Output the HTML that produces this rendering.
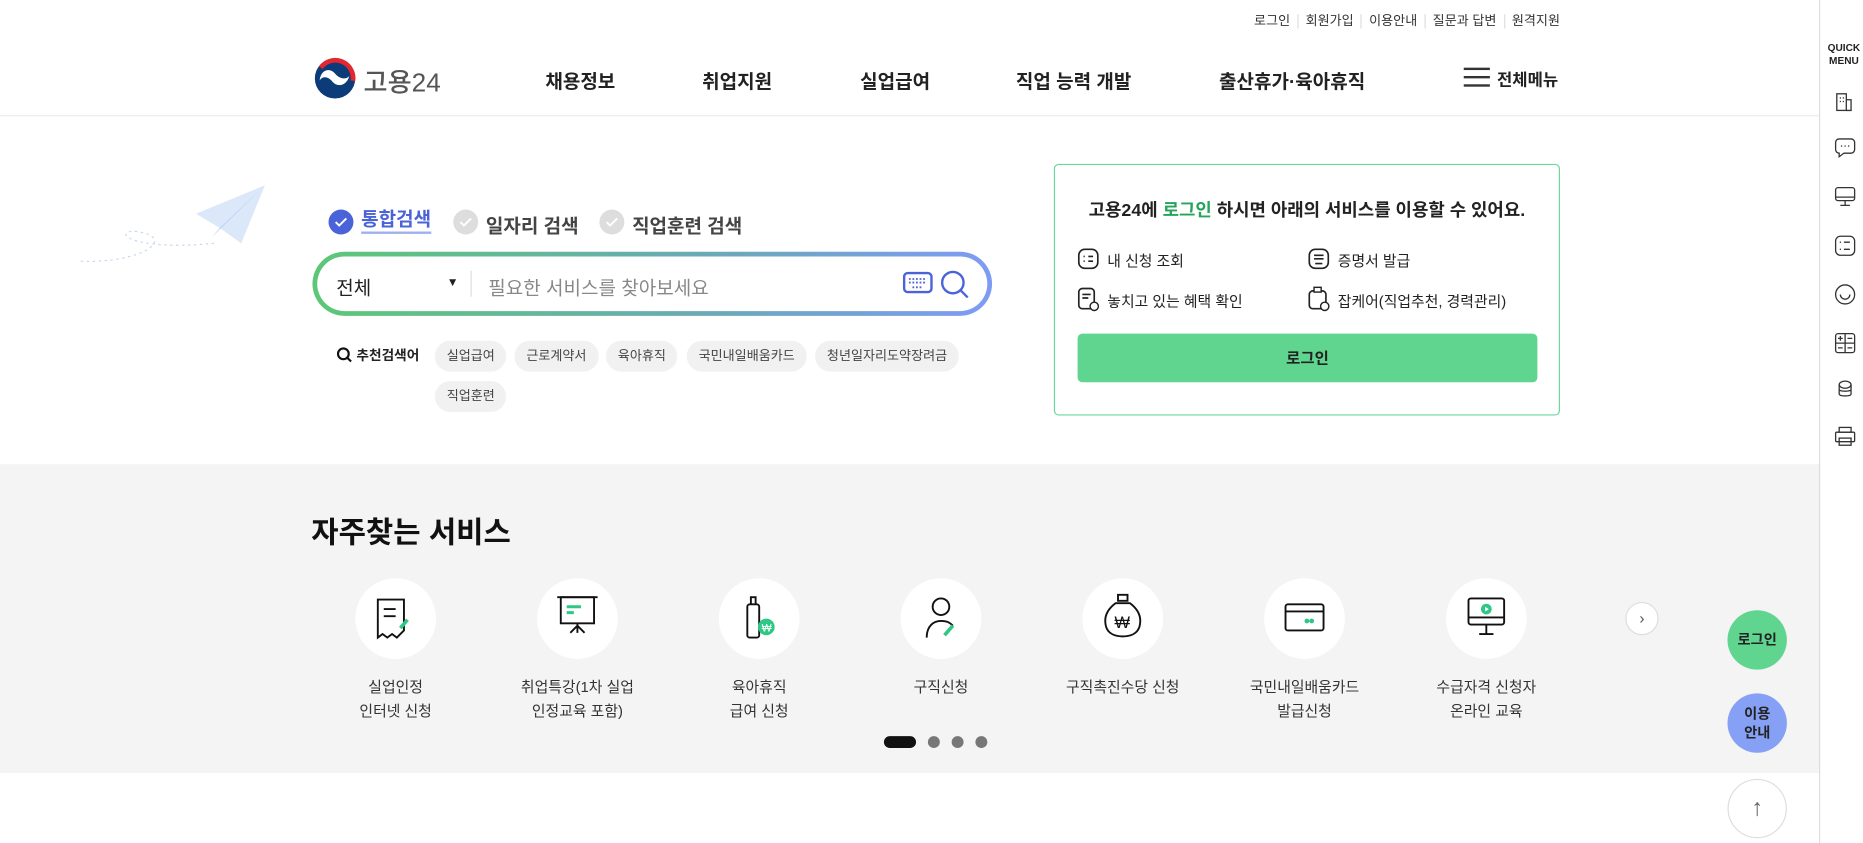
<!DOCTYPE html>
<html><head><meta charset="utf-8">
<style>
*{margin:0;padding:0;box-sizing:border-box}
html,body{width:1863px;height:843px;overflow:hidden;background:#fff}
#w{position:absolute;left:0;top:0;width:1568px;height:710px;transform:scale(1.1881,1.1873);transform-origin:0 0;font-family:"Liberation Sans","Noto Sans CJK KR",sans-serif;color:#222}
.a{position:absolute}
.util{top:9px;right:255px;font-size:11px;color:#333}
.util span{margin-left:6px;padding-left:6px;border-left:1px solid #ddd}
.util span:first-child{border:none}
.nav{top:55px;font-size:16px;font-weight:bold;color:#222}
.tag{position:absolute;height:26px;line-height:26px;padding:0 10px;background:#f1f1f1;border-radius:13px;font-size:11px;color:#444}
.circ{position:absolute;width:68px;height:68px;border-radius:50%;background:#fff;top:487px}
.lab{position:absolute;top:569px;width:140px;text-align:center;font-size:12.5px;line-height:20px;color:#333}
</style></head><body><div id="w">
<div class="a util"><span>로그인</span><span>회원가입</span><span>이용안내</span><span>질문과 답변</span><span>원격지원</span></div>
<svg class="a" style="left:264px;top:48px" width="36" height="36" viewBox="0 0 36 36"><circle cx="18" cy="18" r="17" fill="#0b3b78"/><path d="M6 9 A15 15 0 0 1 33 20" stroke="#e3262f" stroke-width="4" fill="none"/><path d="M5 20 C6 10 14 9 18 14 C22 19 28 19 30 16 C28 24 20 26 16 21 C12 16 7 16 5 20Z" fill="#fff"/></svg>
<div class="a" style="left:306px;top:52px;font-size:22px;color:#555;font-weight:500">고용24</div>
<div class="a nav" style="left:459px">채용정보</div>
<div class="a nav" style="left:591px">취업지원</div>
<div class="a nav" style="left:724px">실업급여</div>
<div class="a nav" style="left:855px">직업 능력 개발</div>
<div class="a nav" style="left:1026px">출산휴가·육아휴직</div>
<div class="a" style="left:1232px;top:57px;width:22px;height:16px;border-top:2px solid #333;border-bottom:2px solid #333"><div style="margin-top:5px;border-top:2px solid #333"></div></div>
<div class="a" style="left:1260px;top:57px;font-size:14px;font-weight:bold">전체메뉴</div>
<div class="a" style="left:0;top:97px;width:1531px;border-top:1px solid #eaeaea"></div>
<div class="a" style="left:1531px;top:0;height:710px;border-left:1px solid #ddd"></div>
<svg class="a" style="left:60px;top:150px" width="170" height="75"><path d="M8 70 C60 72 90 50 55 45 C35 43 45 62 120 55" stroke="#c8d6ec" stroke-dasharray="2 3" fill="none"/><path d="M105 30 L163 6 L143 55 L125 42 Z" fill="#dbe8fa"/><path d="M125 42 L163 6 L118 50 Z" fill="#b8d0f2"/></svg>
<svg class="a" style="left:276px;top:176px" width="22" height="22"><circle cx="11" cy="11" r="10.5" fill="#4a63d9"/><path d="M6.5 11l3 3 6-6" stroke="#fff" stroke-width="1.6" fill="none"/></svg>
<div class="a" style="left:304px;top:177px;font-size:16px;font-weight:bold;color:#4a63d9;border-bottom:2px solid #9fb0ee;line-height:18px">통합검색</div>
<svg class="a" style="left:381px;top:176px" width="22" height="22"><circle cx="11" cy="11" r="10.5" fill="#ddd"/><path d="M6.5 11l3 3 6-6" stroke="#fff" stroke-width="1.6" fill="none"/></svg>
<div class="a" style="left:409px;top:177px;font-size:16px;font-weight:bold;color:#444">일자리 검색</div>
<svg class="a" style="left:504px;top:176px" width="22" height="22"><circle cx="11" cy="11" r="10.5" fill="#ddd"/><path d="M6.5 11l3 3 6-6" stroke="#fff" stroke-width="1.6" fill="none"/></svg>
<div class="a" style="left:532px;top:177px;font-size:16px;font-weight:bold;color:#444">직업훈련 검색</div>
<div class="a" style="left:263px;top:212px;width:572px;height:54px;border-radius:27px;background:linear-gradient(90deg,#5cc777,#6aa9b8 60%,#7e9bf5)"><div style="position:absolute;left:4px;top:4px;right:4px;bottom:4px;border-radius:23px;background:#fff"></div></div>
<div class="a" style="left:283px;top:229px;font-size:16px">전체</div>
<div class="a" style="left:376px;top:233px;font-size:10px">▼</div>
<div class="a" style="left:396px;top:228px;height:22px;border-left:1px solid #ddd"></div>
<div class="a" style="left:411px;top:229px;font-size:16px;color:#888">필요한 서비스를 찾아보세요</div>
<svg class="a" style="left:759px;top:227px" width="58" height="26"><rect x="2" y="3" width="23" height="16" rx="3" fill="none" stroke="#4a63d9" stroke-width="2"/><path d="M6 8h15M6 11h15M9 15h9" stroke="#4a63d9" stroke-width="1.5" stroke-dasharray="1.5 1.5"/><circle cx="43" cy="11" r="9" fill="none" stroke="#4a63d9" stroke-width="2"/><path d="M49.5 17.5l6 6" stroke="#4a63d9" stroke-width="2"/></svg>
<svg class="a" style="left:283px;top:292px" width="14" height="14"><circle cx="6" cy="6" r="4.5" fill="none" stroke="#111" stroke-width="1.8"/><path d="M9.5 9.5l3 3" stroke="#111" stroke-width="1.8"/></svg>
<div class="a" style="left:300px;top:291px;font-size:11.5px;font-weight:bold">추천검색어</div>
<div class="tag" style="left:366px;top:287px">실업급여</div>
<div class="tag" style="left:433px;top:287px">근로계약서</div>
<div class="tag" style="left:510px;top:287px">육아휴직</div>
<div class="tag" style="left:578px;top:287px">국민내일배움카드</div>
<div class="tag" style="left:686px;top:287px">청년일자리도약장려금</div>
<div class="tag" style="left:366px;top:321px">직업훈련</div>
<div class="a" style="left:887px;top:138px;width:426px;height:212px;border:1px solid #6dd69a;border-radius:4px"></div>
<div class="a" style="left:887px;top:166px;width:426px;text-align:center;font-size:15px;font-weight:bold;color:#222">고용24에 <span style="color:#25a55a">로그인</span> 하시면 아래의 서비스를 이용할 수 있어요.</div>
<svg class="a" style="left:906px;top:208px" width="20" height="20"><rect x="2" y="2" width="16" height="16" rx="5" fill="none" stroke="#222" stroke-width="1.4"/><path d="M6 8h1M10 8h4M6 12h1M10 12h4" stroke="#222" stroke-width="1.4"/></svg>
<div class="a" style="left:932px;top:209px;font-size:12.5px">내 신청 조회</div>
<svg class="a" style="left:1100px;top:208px" width="20" height="20"><rect x="2" y="2" width="16" height="16" rx="5" fill="none" stroke="#222" stroke-width="1.4"/><path d="M6 7h8M6 10h8M7 14h6" stroke="#222" stroke-width="1.4"/></svg>
<div class="a" style="left:1126px;top:209px;font-size:12.5px">증명서 발급</div>
<svg class="a" style="left:906px;top:241px" width="20" height="22"><rect x="2" y="2" width="13" height="17" rx="3" fill="none" stroke="#222" stroke-width="1.4"/><path d="M5 7h7M5 10h5" stroke="#222" stroke-width="1.4"/><circle cx="15" cy="17" r="3.5" fill="#fff" stroke="#222" stroke-width="1.2"/></svg>
<div class="a" style="left:932px;top:243px;font-size:12.5px">놓치고 있는 혜택 확인</div>
<svg class="a" style="left:1100px;top:241px" width="20" height="22"><rect x="2" y="4" width="14" height="15" rx="3" fill="none" stroke="#222" stroke-width="1.4"/><rect x="6" y="1" width="6" height="4" fill="#fff" stroke="#222" stroke-width="1.2"/><circle cx="15" cy="17" r="3.5" fill="#fff" stroke="#222" stroke-width="1.2"/></svg>
<div class="a" style="left:1126px;top:243px;font-size:12.5px">잡케어(직업추천, 경력관리)</div>
<div class="a" style="left:907px;top:281px;width:387px;height:41px;border-radius:4px;background:#5fd590;text-align:center;line-height:41px;font-size:13px;font-weight:bold">로그인</div>
<div class="a" style="left:0;top:391px;width:1531px;height:260px;background:#f4f4f4"></div>
<div class="a" style="left:262px;top:429px;font-size:25px;font-weight:bold;color:#111">자주찾는 서비스</div>
<div class="circ" style="left:299px"></div><div class="circ" style="left:452px"></div><div class="circ" style="left:605px"></div><div class="circ" style="left:758px"></div><div class="circ" style="left:911px"></div><div class="circ" style="left:1064px"></div><div class="circ" style="left:1217px"></div>
<svg class="a" style="left:299px;top:487px" width="1000" height="68" fill="none" stroke="#111" stroke-width="1.6">
<path d="M19 18h22v26l-6 6-4-3-4 3-4-3-4 3z"/><path d="M24 26h10M24 32h10"/><path d="M38 42l6-7" stroke="#2fc786" stroke-width="3"/>
<g transform="translate(153,0)"><rect x="20" y="16" width="28" height="22"/><path d="M17 16h34M34 38v8M34 40l-6 6M34 40l6 6"/><path d="M25 24h12M25 29h6" stroke="#2fc786" stroke-width="2.5"/></g>
<g transform="translate(306,0)"><rect x="24" y="22" width="10" height="28" rx="2"/><path d="M27 22v-6h4v6"/><circle cx="40" cy="41" r="7" fill="#2fc786" stroke="none"/><text x="36" y="45" font-size="9" fill="#fff" stroke="none" font-family="Liberation Sans">₩</text></g>
<g transform="translate(459,0)"><circle cx="34" cy="24" r="7"/><path d="M22 50c0-10 6-14 12-14s8 2 10 4"/><path d="M37 48l7-8" stroke="#2fc786" stroke-width="3"/></g>
<g transform="translate(612,0)"><path d="M30 14h8v5h-8zM28 21c-8 6-10 13-8 20 2 6 8 8 14 8s12-2 14-8c2-7 0-14-8-20z"/><text x="27" y="42" font-size="14" fill="#111" stroke="none" font-family="Liberation Sans">₩</text></g>
<g transform="translate(765,0)"><rect x="18" y="22" width="32" height="22" rx="2"/><path d="M18 28h32"/><circle cx="36" cy="36" r="2" fill="#2fc786" stroke="none"/><circle cx="40" cy="36" r="2" fill="#2fc786" stroke="none"/></g>
<g transform="translate(918,0)"><rect x="19" y="17" width="30" height="22" rx="2"/><path d="M19 33h30M34 39v8M28 47h12"/><circle cx="34" cy="26" r="4.5" fill="#2fc786" stroke="none"/><path d="M33 24v4l3-2z" fill="#fff" stroke="none"/></g>
</svg>
<div class="lab" style="left:263px">실업인정<br>인터넷 신청</div>
<div class="lab" style="left:416px">취업특강(1차 실업<br>인정교육 포함)</div>
<div class="lab" style="left:569px">육아휴직<br>급여 신청</div>
<div class="lab" style="left:722px">구직신청</div>
<div class="lab" style="left:875px">구직촉진수당 신청</div>
<div class="lab" style="left:1028px">국민내일배움카드<br>발급신청</div>
<div class="lab" style="left:1181px">수급자격 신청자<br>온라인 교육</div>
<div class="a" style="left:1368px;top:507px;width:28px;height:28px;border-radius:50%;background:#fff;border:1px solid #ddd;text-align:center;line-height:26px;font-size:13px;color:#555">›</div>
<div class="a" style="left:744px;top:620px;width:27px;height:10px;border-radius:5px;background:#111"></div>
<div class="a" style="left:781px;top:620px;width:10px;height:10px;border-radius:5px;background:#777"></div>
<div class="a" style="left:801px;top:620px;width:10px;height:10px;border-radius:5px;background:#777"></div>
<div class="a" style="left:821px;top:620px;width:10px;height:10px;border-radius:5px;background:#777"></div>
<div class="a" style="left:1454px;top:514px;width:50px;height:50px;border-radius:50%;background:#5fd590;text-align:center;line-height:50px;font-size:12px;font-weight:bold">로그인</div>
<div class="a" style="left:1454px;top:584px;width:50px;height:50px;border-radius:50%;background:#86a0f5;text-align:center;font-size:12px;font-weight:bold;padding-top:9px;line-height:16px">이용<br>안내</div>
<div class="a" style="left:1454px;top:656px;width:50px;height:50px;border-radius:50%;background:#fff;border:1px solid #ddd;text-align:center;line-height:48px;font-size:20px;color:#666">↑</div>
<div class="a" style="left:1536px;top:35px;width:32px;text-align:center;font-size:8.5px;font-weight:bold;line-height:11px">QUICK<br>MENU</div>
<svg class="a" style="left:1542px;top:76px" width="22" height="310" fill="none" stroke="#333" stroke-width="1.1">
<rect x="4" y="3" width="8" height="14"/><path d="M12 8h4v9h-4"/><path d="M6.5 6.5h1M9 6.5h1M6.5 9.5h1M9 9.5h1"/>
<path d="M3 44a3 3 0 0 1 3-3h10a3 3 0 0 1 3 3v6a3 3 0 0 1-3 3h-6l-4 3v-3a3 3 0 0 1-3-3z"/><path d="M7.5 47h1M10.5 47h1M13.5 47h1"/>
<rect x="3" y="82" width="16" height="11" rx="2"/><path d="M3 90h16M11 93v4M7 97h8"/>
<rect x="3" y="123" width="16" height="16" rx="4"/><path d="M6.5 128h1M10 128h5M6.5 134h1M10 134h5"/>
<circle cx="11" cy="172" r="8"/><path d="M7 172a4 4 0 0 0 8 0"/>
<rect x="3" y="205" width="16" height="16" rx="2"/><path d="M11 205v16M3 213h16M5 209h4M7 207v4M13 209h4M5 217h4M13 217h4"/>
<ellipse cx="11" cy="248" rx="5" ry="3"/><path d="M6 248v8c0 2 10 2 10 0v-8M6 252c0 2 10 2 10 0"/>
<rect x="6" y="284" width="10" height="4"/><rect x="3" y="288" width="16" height="8" rx="1"/><rect x="6" y="293" width="10" height="6"/>
</svg>
</div></body></html>
